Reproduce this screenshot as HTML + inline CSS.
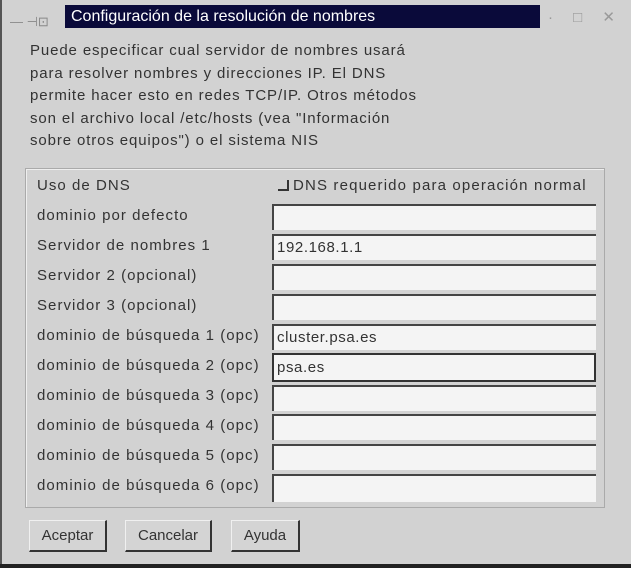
<!DOCTYPE html>
<html><head><meta charset="utf-8"><style>
body{margin:0;width:631px;height:568px;background:#d2d2d2;position:relative;overflow:hidden;font-family:"Liberation Sans",sans-serif;color:#222}
.a{position:absolute}
.tb{left:65px;top:5px;width:475px;height:23px;background:#0a0a3a;color:#fff;font-size:16px;line-height:23px;padding-left:6px;box-sizing:border-box}
.intro{left:30px;top:40px;font-size:15px;letter-spacing:0.88px;line-height:22.5px;color:#333}
.panel{left:25px;top:168px;width:580px;height:340px;border:1px solid #aaa;box-shadow:inset 1px 1px #eee;box-sizing:border-box}
.lbl{left:37px;font-size:15px;letter-spacing:1.05px;color:#333}
.in{left:272px;width:324px;height:26px;background:#f4f4f4;border-top:2px solid #444;border-left:2px solid #444;box-sizing:border-box;font-size:15px;letter-spacing:0.6px;line-height:24px;padding-left:3px;color:#333}
.btn{top:520px;height:32px;background:#d4d4d4;border:1px solid #f0f0f0;border-right:2px solid #333;border-bottom:2px solid #333;box-sizing:border-box;font-size:15px;text-align:center;line-height:29px;color:#333}
</style></head><body>
<div class="a" style="left:0;top:0;width:2px;height:568px;background:#555"></div>
<div class="a" style="left:0;top:564px;width:631px;height:4px;background:#222"></div>
<div class="a" style="left:10px;top:14px;font-size:13px;color:#888">— ⊣⊡</div>
<div class="a tb">Configuración de la resolución de nombres</div>
<div class="a" style="left:548px;top:8px;font-size:15px;color:#999;letter-spacing:8px">· □ ✕</div>
<div class="a intro">Puede especificar cual servidor de nombres usará<br>para resolver nombres y direcciones IP. El DNS<br>permite hacer esto en redes TCP/IP. Otros métodos<br>son el archivo local /etc/hosts (vea "Información<br>sobre otros equipos") o el sistema NIS</div>
<div class="a panel"></div>
<div class="a lbl" style="top:177px">Uso de DNS</div>
<div class="a" style="left:278px;top:180px;width:9px;height:9px;border-right:2px solid #333;border-bottom:2px solid #333"></div>
<div class="a lbl" style="left:293px;top:177px;letter-spacing:1.15px">DNS requerido para operación normal</div>

<div class="a lbl" style="top:207px">dominio por defecto</div><div class="a in" style="top:204px"></div>
<div class="a lbl" style="top:237px">Servidor de nombres 1</div><div class="a in" style="top:234px">192.168.1.1</div>
<div class="a lbl" style="top:267px">Servidor 2 (opcional)</div><div class="a in" style="top:264px"></div>
<div class="a lbl" style="top:297px">Servidor 3 (opcional)</div><div class="a in" style="top:294px"></div>
<div class="a lbl" style="top:327px">dominio de búsqueda 1 (opc)</div><div class="a in" style="top:324px">cluster.psa.es</div>
<div class="a lbl" style="top:357px">dominio de búsqueda 2 (opc)</div><div class="a in" style="top:353px;height:29px;border:2px solid #333;line-height:25px">psa.es</div>
<div class="a lbl" style="top:387px">dominio de búsqueda 3 (opc)</div><div class="a in" style="top:385px"></div>
<div class="a lbl" style="top:417px">dominio de búsqueda 4 (opc)</div><div class="a in" style="top:414px"></div>
<div class="a lbl" style="top:447px">dominio de búsqueda 5 (opc)</div><div class="a in" style="top:444px"></div>
<div class="a lbl" style="top:477px">dominio de búsqueda 6 (opc)</div><div class="a in" style="top:474px;height:28px"></div>

<div class="a btn" style="left:29px;width:78px">Aceptar</div>
<div class="a btn" style="left:125px;width:87px">Cancelar</div>
<div class="a btn" style="left:231px;width:69px">Ayuda</div>
</body></html>
